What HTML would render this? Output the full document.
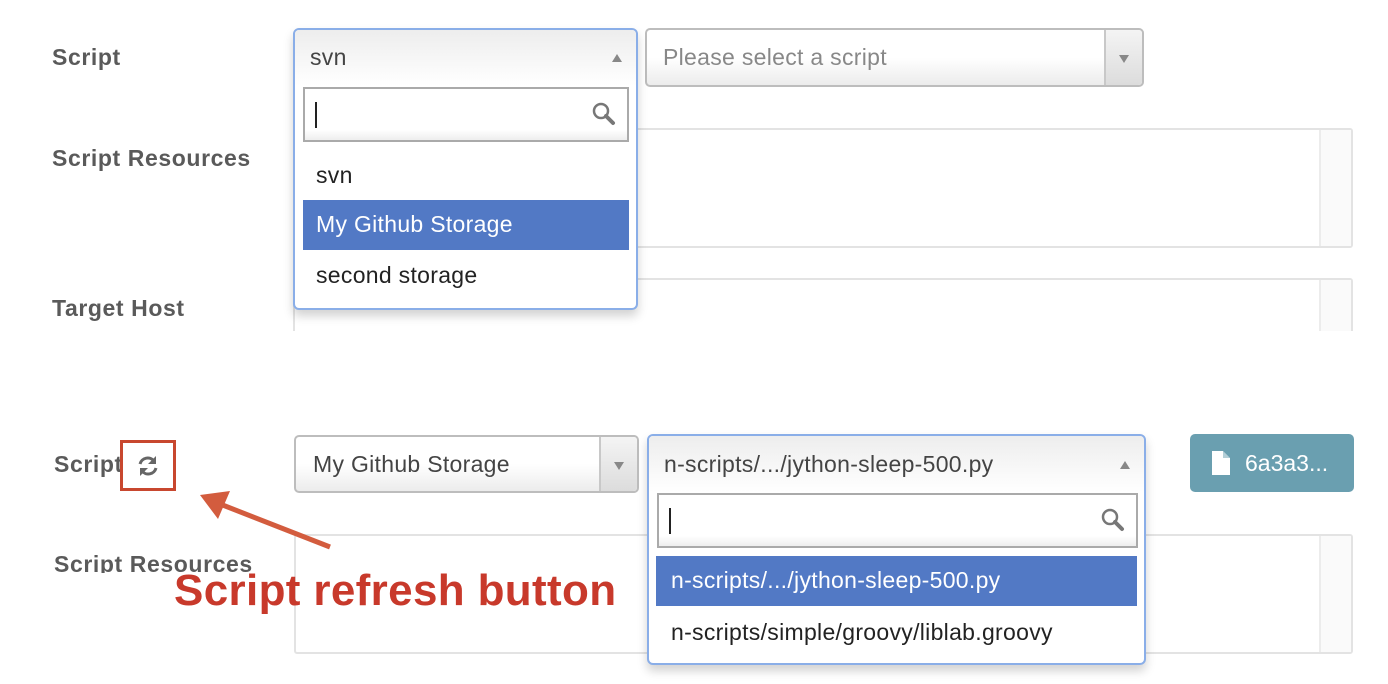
<!DOCTYPE html>
<html><head><meta charset="utf-8"><style>
body{margin:0;width:1388px;height:684px;background:#fff;position:relative;overflow:hidden;font-family:"Liberation Sans",Arial,sans-serif;}
.a{position:absolute;box-sizing:border-box;}
.lbl{position:absolute;font-weight:bold;color:#5a5a5a;font-size:23px;letter-spacing:0.6px;}
.box{position:absolute;box-sizing:border-box;border:2px solid #e3e3e3;border-radius:3px;background:#fff;}
.gut{position:absolute;top:0;bottom:0;right:0;width:30px;border-left:2px solid #ececec;background:#fafafa;}
.sel{position:absolute;box-sizing:border-box;border:2px solid #bdbdbd;border-radius:5px;background:linear-gradient(#fff 50%,#ececec);font-size:23px;letter-spacing:0.3px;color:#444;}
.sel .ar{position:absolute;right:0;top:0;bottom:0;width:36px;border-left:2px solid #c8c8c8;background:linear-gradient(#f4f4f4,#dcdcdc);border-radius:0 4px 4px 0;}
.tri{position:absolute;width:0;height:0;border-left:5px solid transparent;border-right:5px solid transparent;}
.dd{position:absolute;box-sizing:border-box;border:2px solid #8aaee8;border-radius:6px;background:#fff;box-shadow:0 6px 10px rgba(0,0,0,.18);}
.dhead{position:absolute;left:0;right:0;top:0;height:56px;background:linear-gradient(#ededed,#fff);border-radius:4px 4px 0 0;font-size:23px;letter-spacing:0.3px;color:#444;}
.srch{position:absolute;box-sizing:border-box;border:2px solid #aaa;background:linear-gradient(#fff 80%,#eee);}
.cur{position:absolute;left:10px;top:13px;width:2px;height:26px;background:#222;}
.it{position:absolute;font-size:23px;letter-spacing:0.3px;color:#222;}
.hl{position:absolute;background:#5279c5;color:#fff;font-size:23px;letter-spacing:0.3px;}
</style></head><body>

<div class="lbl" style="left:52px;top:44px">Script</div>
<div class="lbl" style="left:52px;top:145px">Script Resources</div>
<div class="lbl" style="left:52px;top:295px">Target Host</div>

<div class="box" style="left:293px;top:128px;width:1060px;height:120px"><div class="gut"></div></div>
<div class="box" style="left:293px;top:278px;width:1060px;height:80px"><div class="gut"></div></div>
<div class="a" style="left:280px;top:331px;width:1100px;height:40px;background:#fff"></div>

<div class="sel" style="left:645px;top:28px;width:499px;height:59px;">
 <span style="position:absolute;left:16px;top:14px;color:#888">Please select a script</span>
 <div class="ar"><div class="tri" style="left:13px;top:25px;border-top:8px solid #888"></div></div>
</div>

<div class="dd" style="left:293px;top:28px;width:345px;height:282px">
 <div class="dhead"><span style="position:absolute;left:15px;top:14px">svn</span>
  <div class="tri" style="right:14px;top:24px;border-bottom:8px solid #888"></div></div>
 <div class="srch" style="left:8px;top:57px;width:326px;height:55px"><div class="cur"></div>
  <svg style="position:absolute;right:10px;top:12px" width="26" height="26" viewBox="0 0 26 26"><circle cx="10" cy="10" r="7" fill="none" stroke="#777" stroke-width="2.5"/><path d="M15 15 L22 22" stroke="#777" stroke-width="4" stroke-linecap="round"/></svg></div>
 <div class="it" style="left:21px;top:132px">svn</div>
 <div class="hl" style="left:8px;top:170px;width:326px;height:50px"><span style="position:absolute;left:13px;top:11px">My Github Storage</span></div>
 <div class="it" style="left:21px;top:232px">second storage</div>
</div>

<div class="lbl" style="left:54px;top:451px">Script</div>
<div class="a" style="left:120px;top:440px;width:56px;height:51px;border:3px solid #c8472f;background:#fff"></div>
<svg style="position:absolute;left:135px;top:453px" width="26" height="26" viewBox="0 0 26 26"><path d="M5 11 A8 8 0 0 1 19 8" fill="none" stroke="#666" stroke-width="3"/><path d="M21 3 L21 11 L13 11 Z" fill="#666"/><path d="M21 15 A8 8 0 0 1 7 18" fill="none" stroke="#666" stroke-width="3"/><path d="M5 23 L5 15 L13 15 Z" fill="#666"/></svg>

<div class="box" style="left:294px;top:534px;width:1059px;height:120px"><div class="gut"></div></div>
<div class="lbl" style="left:54px;top:551px;height:22px;overflow:hidden">Script Resources</div>

<div class="sel" style="left:294px;top:435px;width:345px;height:58px;">
 <span style="position:absolute;left:17px;top:14px">My Github Storage</span>
 <div class="ar"><div class="tri" style="left:13px;top:25px;border-top:8px solid #888"></div></div>
</div>

<div class="a" style="left:1190px;top:434px;width:164px;height:58px;background:#6a9fb0;border-radius:5px;color:#fff;font-size:23px">
 <svg style="position:absolute;left:22px;top:17px" width="18" height="24" viewBox="0 0 18 24"><path d="M0 0 H11 L18 7 V24 H0 Z" fill="#fff"/><path d="M11 0 V7 H18" fill="#6a9fb0" opacity=".5"/></svg>
 <span style="position:absolute;left:55px;top:16px">6a3a3...</span>
</div>

<div class="dd" style="left:647px;top:434px;width:499px;height:231px">
 <div class="dhead"><span style="position:absolute;left:15px;top:15px">n-scripts/.../jython-sleep-500.py</span>
  <div class="tri" style="right:14px;top:25px;border-bottom:8px solid #888"></div></div>
 <div class="srch" style="left:8px;top:57px;width:481px;height:55px"><div class="cur"></div>
  <svg style="position:absolute;right:10px;top:12px" width="26" height="26" viewBox="0 0 26 26"><circle cx="10" cy="10" r="7" fill="none" stroke="#777" stroke-width="2.5"/><path d="M15 15 L22 22" stroke="#777" stroke-width="4" stroke-linecap="round"/></svg></div>
 <div class="hl" style="left:7px;top:120px;width:481px;height:50px"><span style="position:absolute;left:15px;top:11px">n-scripts/.../jython-sleep-500.py</span></div>
 <div class="it" style="left:22px;top:183px">n-scripts/simple/groovy/liblab.groovy</div>
</div>

<svg style="position:absolute;left:190px;top:485px" width="150" height="70" viewBox="0 0 150 70"><path d="M140 62 L30 19" stroke="#d35c3e" stroke-width="5"/><path d="M10 10 L40 6 L28 34 Z" fill="#d35c3e"/></svg>

<div class="a" style="left:174px;top:566px;font-size:44px;font-weight:bold;color:#c8392b;letter-spacing:0.35px;white-space:nowrap">Script refresh button</div>
</body></html>
